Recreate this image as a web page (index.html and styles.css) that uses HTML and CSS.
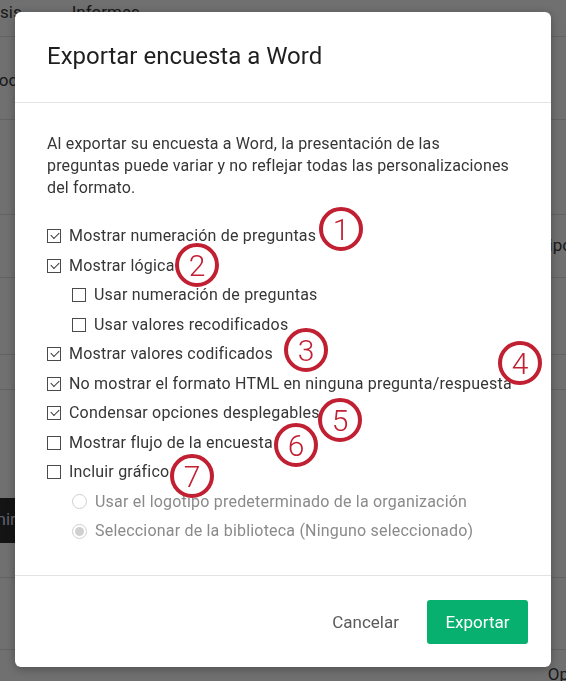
FILE: index.html
```html
<!DOCTYPE html>
<html lang="es">

<head>
    <meta charset="UTF-8">
    <meta name="viewport" content="width=device-width, initial-scale=1.0">
    <title>Exportar encuesta a Word</title>
    <link rel="stylesheet" href="styles.css">
</head>

<body>

    <div class="page">
        <div class="tabs">
            <span class="tab tab-first">Análisis</span>
            <span class="tab">Informes</span>
        </div>
        <div class="page-row row-a"><span class="cut-left">Bloc</span></div>
        <div class="page-row row-b"></div>
        <div class="page-row row-c"><span class="cut-right">Tipo</span></div>
        <div class="page-row row-d"></div>
        <div class="page-row row-e"></div>
        <div class="dark-bar"><span>Imprimir</span></div>
        <div class="page-row row-f"></div>
        <div class="page-row row-g"></div>
        <div class="bottom-text">Opc</div>
    </div>

    <div class="overlay"></div>

    <div class="modal">
        <div class="modal-header">
            <h2>Exportar encuesta a Word</h2>
        </div>

        <div class="modal-body">
            <p class="intro">Al exportar su encuesta a Word, la presentación de las<br>preguntas puede variar y no reflejar todas las personalizaciones del formato.</p>

            <ul class="options">
                <li><span class="box checked"></span>Mostrar numeración de preguntas</li>
                <li><span class="box checked"></span>Mostrar lógica</li>
                <li class="sub"><span class="box"></span>Usar numeración de preguntas</li>
                <li class="sub"><span class="box"></span>Usar valores recodificados</li>
                <li><span class="box checked"></span>Mostrar valores codificados</li>
                <li><span class="box checked"></span>No mostrar el formato HTML en ninguna pregunta/respuesta</li>
                <li><span class="box checked"></span>Condensar opciones desplegables</li>
                <li><span class="box"></span>Mostrar flujo de la encuesta</li>
                <li><span class="box"></span>Incluir gráfico</li>
                <li class="sub disabled"><span class="radio"></span>Usar el logotipo predeterminado de la organización</li>
                <li class="sub disabled"><span class="radio selected"></span>Seleccionar de la biblioteca (Ninguno seleccionado)</li>
            </ul>
        </div>

        <div class="modal-footer">
            <button class="btn-link">Cancelar</button>
            <button class="btn-primary">Exportar</button>
        </div>

        <!-- marcas numeradas -->
        <span class="mark m1">1</span>
        <span class="mark m2">2</span>
        <span class="mark m3">3</span>
        <span class="mark m4">4</span>
        <span class="mark m5">5</span>
        <span class="mark m6">6</span>
        <span class="mark m7">7</span>
    </div>

</body>

</html>
```

FILE: styles.css
```css
* {
    box-sizing: border-box;
}

body {
    margin: 0;
    height: 681px;
    overflow: hidden;
    font-family: Roboto, "Liberation Sans", sans-serif;
    background-color: #fff;
}

/* pagina de fondo */
.page {
    color: #3c3c3c;
    font-size: 17px;
    overflow: hidden;
}

.tabs {
    display: flex;
    gap: 22px;
    height: 37px;
    padding-top: 2px;
    border-bottom: 1px solid #e2e2e2;
    margin-left: -52px;
}

.tab {
    padding: 0 14px;
}

.page-row {
    border-bottom: 1px solid #e2e2e2;
}

.row-a {
    height: 83px;
    padding-top: 33px;
}

.row-b {
    height: 95px;
}

.row-c {
    height: 63px;
}

.row-d {
    height: 77px;
}

.row-e {
    height: 35px;
}

.row-f {
    height: 35px;
}

.row-g {
    height: 72px;
}

.cut-left {
    display: inline-block;
    margin-left: -16px;
}

.cut-right {
    display: block;
    text-align: right;
    margin-right: -6px;
    padding-top: 20px;
}

.bottom-text {
    text-align: right;
    margin-right: -12px;
    padding-top: 14px;
}

.dark-bar {
    height: 45px;
    margin-top: 108px;
    background-color: #2e2e2e;
    color: #d8d8f0;
    padding-top: 11px;
    width: 60px;
    text-indent: -48px;
    white-space: nowrap;
}

.overlay {
    position: fixed;
    inset: 0;
    background-color: rgba(0, 0, 0, 0.56);
}

/* dialogo */
.modal {
    position: absolute;
    left: 15px;
    top: 12px;
    width: 536px;
    height: 655px;
    background-color: #fff;
    border-radius: 6px;
    box-shadow: 0 2px 10px rgba(0, 0, 0, 0.3);
    display: flex;
    flex-direction: column;
}

.modal-header {
    padding: 31px 32px 32px 32px;
    border-bottom: 1px solid #e3e3e3;
}

.modal-header h2 {
    margin: 0;
    font-size: 24px;
    line-height: 27px;
    font-weight: 400;
    color: #1f1f1f;
}

.modal-body {
    flex: 1;
    padding: 30px 24px 0 32px;
    border-bottom: 1px solid #e3e3e3;
    color: #363636;
    font-size: 16px;
}

.intro {
    margin: 0 0 26px 0;
    line-height: 22px;
    letter-spacing: 0.15px;
}

.options {
    list-style: none;
    margin: 0;
    padding: 0;
    display: flex;
    flex-direction: column;
    gap: 7.5px;
}

.options li {
    display: flex;
    align-items: center;
    gap: 8px;
    line-height: 22px;
    letter-spacing: 0.2px;
    white-space: nowrap;
}

.options li.sub {
    padding-left: 25px;
}

.options li.disabled {
    color: #8a8a8a;
}

.box {
    width: 14px;
    height: 14px;
    border: 1px solid #4a4a4a;
    position: relative;
    flex-shrink: 0;
}

.box.checked::after {
    content: "";
    position: absolute;
    left: 3px;
    top: 2px;
    width: 7px;
    height: 4px;
    border-left: 1.3px solid #333;
    border-bottom: 1.3px solid #333;
    transform: rotate(-45deg);
}

.radio {
    width: 15px;
    height: 15px;
    border: 1px solid #cfcfcf;
    border-radius: 50%;
    position: relative;
    flex-shrink: 0;
}

.radio.selected::after {
    content: "";
    position: absolute;
    left: 2px;
    top: 2px;
    width: 9px;
    height: 9px;
    border-radius: 50%;
    background-color: #d0d0d0;
}

.modal-footer {
    height: 91px;
    display: flex;
    justify-content: flex-end;
    align-items: center;
    gap: 21px;
    padding: 0 23px 0 0;
}

.btn-link {
    border: none;
    background: none;
    font-family: inherit;
    font-size: 17px;
    color: #5a5a5a;
    padding: 0 7px;
}

.btn-primary {
    border: none;
    border-radius: 3px;
    background-color: #07b06f;
    color: #fff;
    font-family: inherit;
    font-size: 17px;
    width: 101px;
    height: 44px;
}

/* anotaciones */
.mark {
    position: absolute;
    width: 44px;
    height: 44px;
    border: 4px solid #c11f32;
    border-radius: 50%;
    color: #c11f32;
    font-size: 30px;
    font-weight: 300;
    display: flex;
    align-items: center;
    justify-content: center;
}

.m1 { left: 304px; top: 195px; }
.m2 { left: 160px; top: 231px; }
.m3 { left: 269px; top: 316px; }
.m4 { left: 483px; top: 329px; }
.m5 { left: 303px; top: 386px; }
.m6 { left: 259px; top: 411px; }
.m7 { left: 155px; top: 442px; }
```
